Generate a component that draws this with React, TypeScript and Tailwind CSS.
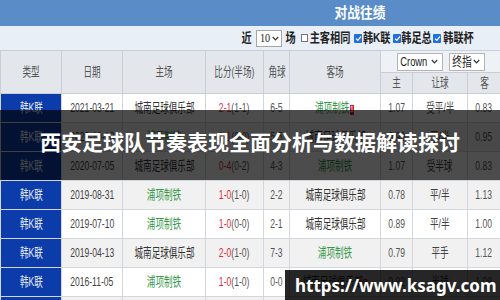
import React from "react";

type Row = {
  date: string;
  home: string;
  homeG: boolean;
  s: string;
  h: string;
  c: string;
  away: string;
  awayG: boolean;
  badge?: "home" | "away";
  o1: string;
  hc: string;
  o2: string;
};

const rows: Row[] = [
  { date: "2021-03-21", home: "城南足球俱乐部", homeG: false, s: "2-1", h: "(1-1)", c: "6-5", away: "浦项制铁", awayG: true, badge: "away", o1: "1.07", hc: "受平/半", o2: "0.83" },
  { date: "2020-10-18", home: "浦项制铁", homeG: true, s: "1-1", h: "(0-0)", c: "5-5", away: "城南足球俱乐部", awayG: false, o1: "0.90", hc: "平/半", o2: "0.95" },
  { date: "2020-07-05", home: "城南足球俱乐部", homeG: false, s: "0-4", h: "(0-2)", c: "4-3", away: "浦项制铁", awayG: true, o1: "1.07", hc: "受半球", o2: "0.83" },
  { date: "2019-08-31", home: "浦项制铁", homeG: true, s: "1-0", h: "(1-0)", c: "2-2", away: "城南足球俱乐部", awayG: false, o1: "0.78", hc: "平/半", o2: "1.13" },
  { date: "2019-07-10", home: "浦项制铁", homeG: true, s: "1-0", h: "(0-0)", c: "2-1", away: "城南足球俱乐部", awayG: false, o1: "0.89", hc: "平/半", o2: "1.00" },
  { date: "2019-04-13", home: "城南足球俱乐部", homeG: false, s: "2-0", h: "(1-0)", c: "7-3", away: "浦项制铁", awayG: true, o1: "0.79", hc: "平手", o2: "1.12" },
  { date: "2016-11-05", home: "浦项制铁", homeG: true, s: "1-0", h: "(1-0)", c: "0-0", away: "城南足球俱乐部", awayG: false, badge: "away", o1: "0.82", hc: "半球", o2: "1.08" },
];

const FONT = "font-['Liberation_Sans','Noto_Sans_CJK_SC',sans-serif]";

function N({ children, className = "" }: { children: React.ReactNode; className?: string }) {
  return (
    <span className={`inline-block shrink-0 whitespace-nowrap scale-x-[0.66] ${className}`}>{children}</span>
  );
}

function Cell({ children, className = "" }: { children?: React.ReactNode; className?: string }) {
  return (
    <td className={`border border-[#d3d7dd] p-0 ${className}`}>
      <div className="flex items-center justify-center overflow-visible">{children}</div>
    </td>
  );
}

function Chevron() {
  return (
    <svg width="7" height="5" viewBox="0 0 7 5" className="shrink-0">
      <path d="M0.8 1 L3.5 3.8 L6.2 1" fill="none" stroke="#333" strokeWidth="1.2" />
    </svg>
  );
}

function Check() {
  return (
    <span className="inline-flex h-[9px] w-[8px] items-center justify-center rounded-[1px] bg-[#1e6fe0]">
      <svg width="7" height="7" viewBox="0 0 7 7">
        <path d="M1 3.6 L2.8 5.3 L6 1.5" fill="none" stroke="#fff" strokeWidth="1.2" />
      </svg>
    </span>
  );
}

function Badge() {
  return (
    <span className="ml-[1px] mt-[-4px] inline-flex h-[10px] w-[6px] items-center justify-center self-start bg-[#d42030] text-[9px] leading-none text-white">
      1
    </span>
  );
}

export default function App() {
  return (
    <div className={`relative h-[300px] w-[500px] overflow-hidden bg-white ${FONT}`}>
      {/* title bar */}
      <div className="flex h-[26px] items-center justify-center bg-[#5a8cc7] pl-[220px]">
        <span className="inline-block scale-x-[0.85] text-[15px] font-bold text-white">对战往绩</span>
      </div>

      {/* controls row */}
      <div className="flex h-[24px] items-center justify-end bg-[#e9eff7] pr-[27px] text-[13px] font-bold text-[#222]">
        <span className="flex w-[9px] justify-center"><N className="scale-x-[0.78]">近</N></span>
        <div className="ml-[5px] flex h-[17px] w-[26px] items-center justify-between border border-[#a5a5a5] bg-white px-[2px]">
          <span className="inline-block scale-x-[0.85] font-['Liberation_Serif',serif] text-[12px] font-normal">10</span>
          <Chevron />
        </div>
        <span className="ml-[4px] flex w-[9px] justify-center"><N className="scale-x-[0.78]">场</N></span>
        <span className="ml-[6px] inline-block h-[8px] w-[7px] border border-[#777] bg-white" />
        <span className="ml-[2px] flex w-[40px] justify-center"><N className="scale-x-[0.78]">主客相同</N></span>
        <span className="ml-[4px] flex"><Check /></span>
        <span className="flex w-[30px] justify-center"><N className="scale-x-[0.78]">韩K联</N></span>
        <span className="ml-[1px] flex"><Check /></span>
        <span className="flex w-[31px] justify-center"><N className="scale-x-[0.78]">韩足总</N></span>
        <span className="ml-[1px] flex"><Check /></span>
        <span className="ml-[2px] flex w-[30px] justify-center"><N className="scale-x-[0.78]">韩联杯</N></span>
      </div>

      {/* table */}
      <table className="w-[500px] table-fixed border-collapse text-[13px]">
        <colgroup>
          <col className="w-[61px]" />
          <col className="w-[61px]" />
          <col className="w-[83px]" />
          <col className="w-[58px]" />
          <col className="w-[26px]" />
          <col className="w-[91px]" />
          <col className="w-[32px]" />
          <col className="w-[55px]" />
          <col className="w-[33px]" />
        </colgroup>
        <thead className="text-[#555]">
          <tr className="h-[22px]">
            <th rowSpan={2} className="border border-[#c9ced6] bg-[#e3e7ec] p-0 font-normal">
              <div className="flex justify-center"><N>类型</N></div>
            </th>
            <th rowSpan={2} className="border border-[#c9ced6] bg-[#e3e7ec] p-0 font-normal">
              <div className="flex justify-center"><N>日期</N></div>
            </th>
            <th rowSpan={2} className="border border-[#c9ced6] bg-[#e3e7ec] p-0 font-normal">
              <div className="flex justify-center"><N>主场</N></div>
            </th>
            <th rowSpan={2} className="border border-[#c9ced6] bg-[#e3e7ec] p-0 font-normal">
              <div className="flex justify-center"><N>比分(半场)</N></div>
            </th>
            <th rowSpan={2} className="border border-[#c9ced6] bg-[#e3e7ec] p-0 font-normal">
              <div className="flex justify-center"><N>角球</N></div>
            </th>
            <th rowSpan={2} className="border border-[#c9ced6] bg-[#e3e7ec] p-0 font-normal">
              <div className="flex justify-center"><N>客场</N></div>
            </th>
            <th colSpan={3} className="border border-[#c9ced6] bg-[#eef2f7] p-0 font-normal">
              <div className="flex items-center justify-center gap-[6px] text-[#222]">
                <div className="flex h-[18px] w-[46px] items-center justify-between border border-[#b5b5b5] bg-white pl-[1px] pr-[4px]">
                  <span className="flex w-[30px] justify-center"><N className="scale-x-[0.72]">Crown</N></span>
                  <Chevron />
                </div>
                <div className="flex h-[18px] w-[36px] items-center justify-between border border-[#b5b5b5] bg-white pl-[2px] pr-[4px]">
                  <span className="flex w-[20px] justify-center"><N className="scale-x-[0.75]">终指</N></span>
                  <Chevron />
                </div>
              </div>
            </th>
          </tr>
          <tr className="h-[21px]">
            <th className="border border-[#c9ced6] bg-[#e3e7ec] p-0 font-normal">
              <div className="flex justify-center"><N>主</N></div>
            </th>
            <th className="border border-[#c9ced6] bg-[#e3e7ec] p-0 font-normal">
              <div className="flex justify-center"><N>让球</N></div>
            </th>
            <th className="border border-[#c9ced6] bg-[#e3e7ec] p-0 font-normal">
              <div className="flex justify-center"><N>客</N></div>
            </th>
          </tr>
        </thead>
        <tbody className="text-[#444]">
          {rows.map((r, i) => (
            <tr key={i} className={`h-[29px] ${i % 2 === 1 ? "bg-[#f1f1f1]" : "bg-white"}`}>
              <Cell className="bg-[#0c3ca9] text-[#e3e9f7]"><N>韩K联</N></Cell>
              <Cell><N>{r.date}</N></Cell>
              <Cell className={r.homeG ? "text-[#38984a]" : "text-[#333]"}><N>{r.home}</N></Cell>
              <Cell>
                <N>
                  <span className="text-[#de2a36]">{r.s}</span>
                  <span className="text-[#555]">{r.h}</span>
                </N>
              </Cell>
              <Cell className="text-[#555]"><N>{r.c}</N></Cell>
              <Cell className={r.awayG ? "text-[#38984a]" : "text-[#333]"}>
                <N className="flex items-center">
                  <span>{r.away}</span>
                  {r.badge === "away" ? <Badge /> : null}
                </N>
              </Cell>
              <Cell className="text-[#555]"><N>{r.o1}</N></Cell>
              <Cell className="text-[#444]"><N>{r.hc}</N></Cell>
              <Cell className="text-[#555]"><N>{r.o2}</N></Cell>
            </tr>
          ))}
          <tr className="h-[29px] bg-[#f1f1f1]">
            <Cell className="bg-[#0c3ca9]" />
            <Cell />
            <Cell />
            <Cell />
            <Cell />
            <Cell />
            <Cell />
            <Cell />
            <Cell />
          </tr>
        </tbody>
      </table>

      {/* headline overlay */}
      <div className="absolute left-0 top-[110px] flex h-[70px] w-[500px] items-center justify-center bg-black/70 pb-[8px]">
        <span className="font-['Noto_Sans_CJK_SC',sans-serif] text-[21px] font-bold leading-none text-white">
          西安足球队节奏表现全面分析与数据解读探讨
        </span>
      </div>

      {/* watermark */}
      <div className="absolute left-[285px] top-[270px] flex h-[30px] w-[215px] items-center bg-black/85 pl-[10px]">
        <span className="font-['Noto_Sans',sans-serif] text-[17px] font-bold leading-none text-white">https://www.ksagv.com</span>
      </div>
    </div>
  );
}
